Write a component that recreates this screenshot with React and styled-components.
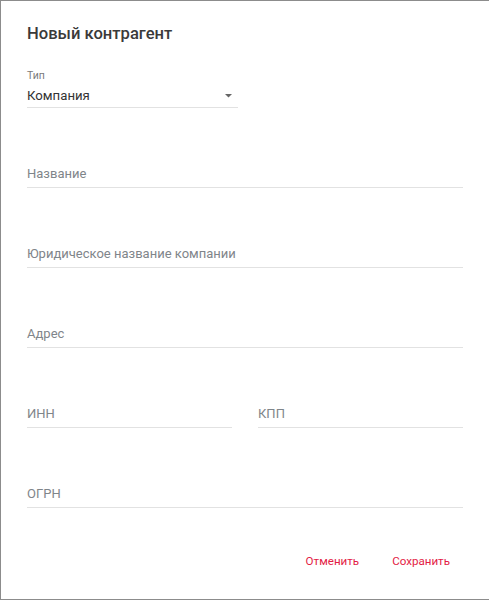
import React from "react";
import styled, { createGlobalStyle } from "styled-components";

const Global = createGlobalStyle`
  html, body { margin: 0; padding: 0; background: #fff; }
  body { font-family: Roboto, "Noto Sans", Arial, sans-serif; -webkit-font-smoothing: antialiased; }
  * { box-sizing: border-box; }
`;

const Dialog = styled.div`
  width: 489px;
  height: 600px;
  border: 1px solid #8c8c8c;
  border-right: none;
  background: #fff;
  padding: 23px 0 0 26px;
  display: flex;
  flex-direction: column;
`;

const Title = styled.h2`
  margin: 0;
  font-size: 16.6px;
  line-height: 20px;
  font-weight: 500;
  color: #3a3a3a;
`;

const Form = styled.div`
  width: 436px;
  margin-top: 26px;
  display: flex;
  flex-direction: column;
  gap: 57px;
`;

const Select = styled.div`
  width: 211px;
  border-bottom: 1px solid #e2e2e2;
  padding-bottom: 3px;
  display: flex;
  flex-direction: column;
`;

const SmallLabel = styled.span`
  font-size: 10.5px;
  line-height: 12px;
  color: #7a7a7a;
`;

const SelectValue = styled.div`
  margin-top: 5px;
  display: flex;
  align-items: center;
  justify-content: space-between;
  font-size: 13.2px;
  line-height: 17px;
  color: #333;
  padding-right: 6px;
`;

const Field = styled.div`
  flex: ${(p) => (p.$half ? "0 0 205px" : "1 1 auto")};
  border-bottom: 1px solid #e2e2e2;
  padding: 1px 0 5px;
  font-size: 13px;
  line-height: 16px;
  color: #7f858a;
`;

const Row = styled.div`
  display: flex;
  gap: 26px;
`;

const Actions = styled.div`
  width: 436px;
  margin-top: 39px;
  display: flex;
  justify-content: flex-end;
  gap: 17px;
  padding-right: 5px;
`;

const Button = styled.button`
  border: none;
  background: none;
  padding: 6px 8px;
  font-family: inherit;
  font-size: 11.6px;
  line-height: 16px;
  color: #e31c45;
  cursor: pointer;
`;

const Caret = () => (
  <svg width="7" height="4" viewBox="0 0 7 4">
    <path d="M0 0 L7 0 L3.5 3.5 Z" fill="#666" />
  </svg>
);

export default function App() {
  return (
    <>
      <Global />
      <Dialog>
        <Title>Новый контрагент</Title>
        <Form>
          <Select>
            <SmallLabel>Тип</SmallLabel>
            <SelectValue>
              <span>Компания</span>
              <Caret />
            </SelectValue>
          </Select>
          <Field>Название</Field>
          <Field>Юридическое название компании</Field>
          <Field>Адрес</Field>
          <Row>
            <Field $half>ИНН</Field>
            <Field $half>КПП</Field>
          </Row>
          <Field>ОГРН</Field>
        </Form>
        <Actions>
          <Button>Отменить</Button>
          <Button>Сохранить</Button>
        </Actions>
      </Dialog>
    </>
  );
}
